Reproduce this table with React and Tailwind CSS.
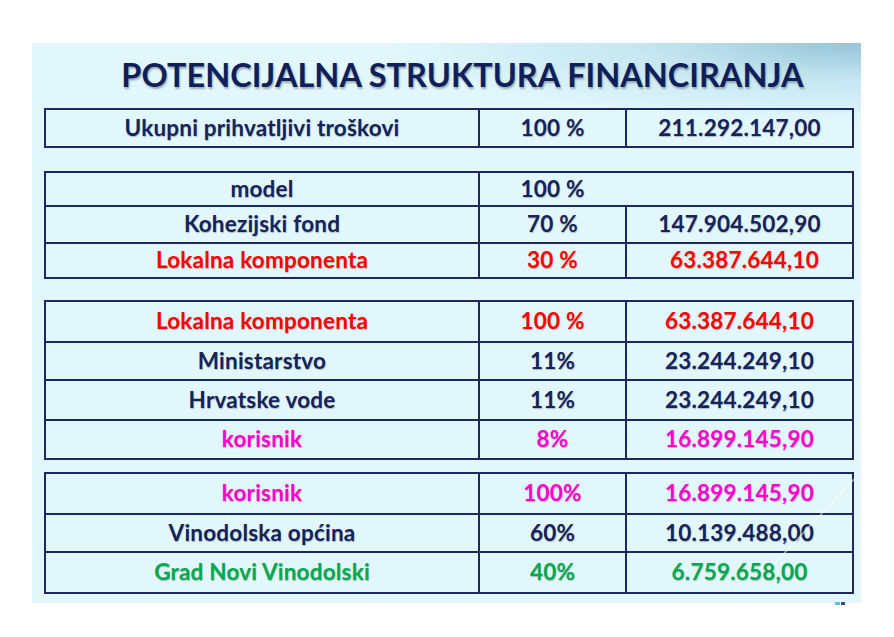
import React from "react";

const navy = "text-[#15235a]";
const red = "text-[#ff0000]";
const pink = "text-[#ff00cc]";
const green = "text-[#00a94f]";

const tables = [
  {
    mt: "mt-0",
    rows: [{ h: "h-[36px]", c: navy, cells: ["Ukupni prihvatljivi troškovi", "100 %", "211.292.147,00"] }],
  },
  {
    mt: "mt-[23px]",
    rows: [
      { h: "h-[32px]", c: navy, cells: ["model", "100 %"], merged: true },
      { h: "h-[37px]", c: navy, cells: ["Kohezijski fond", "70 %", "147.904.502,90"] },
      { h: "h-[35px]", c: red, cells: ["Lokalna komponenta", "30 %", "63.387.644,10"], shift: true },
    ],
  },
  {
    mt: "mt-[21px]",
    rows: [
      { h: "h-[39px]", c: red, cells: ["Lokalna komponenta", "100 %", "63.387.644,10"] },
      { h: "h-[38px]", c: navy, cells: ["Ministarstvo", "11%", "23.244.249,10"] },
      { h: "h-[40px]", c: navy, cells: ["Hrvatske vode", "11%", "23.244.249,10"] },
      { h: "h-[39px]", c: pink, cells: ["korisnik", "8%", "16.899.145,90"] },
    ],
  },
  {
    mt: "mt-[12px]",
    rows: [
      { h: "h-[39px]", c: pink, cells: ["korisnik", "100%", "16.899.145,90"] },
      { h: "h-[38px]", c: navy, cells: ["Vinodolska općina", "60%", "10.139.488,00"] },
      { h: "h-[41px]", c: green, cells: ["Grad Novi Vinodolski", "40%", "6.759.658,00"] },
    ],
  },
];

function Row({ row, first }) {
  return (
    <div
      className={`grid grid-cols-[432px_147px_227px] ${row.h} ${row.c} ${
        first ? "" : "border-t-2 border-[#1b2a5e]"
      }`}
    >
      <div className="flex items-center justify-center">{row.cells[0]}</div>
      {row.merged ? (
        <div className="col-span-2 flex items-center border-l-2 border-[#1b2a5e]">
          <span className="w-[145px] text-center">{row.cells[1]}</span>
        </div>
      ) : (
        <>
          <div className="flex items-center justify-center border-l-2 border-[#1b2a5e]">
            {row.cells[1]}
          </div>
          <div
            className={`flex items-center justify-center border-l-2 border-[#1b2a5e] ${
              row.shift ? "pl-[10px]" : ""
            }`}
          >
            {row.cells[2]}
          </div>
        </>
      )}
    </div>
  );
}

export default function App() {
  return (
    <div
      className="w-[894px] h-[637px] bg-white pt-[43px] pl-[32px]"
      style={{ fontFamily: "Lato, 'Open Sans', sans-serif" }}
    >
      <div className="relative w-[829px] h-[560px] pl-[12px] bg-[#e1f7fc] bg-[radial-gradient(ellipse_480px_80px_at_100%_0%,#95c3d8,#c5e6f0_45%,#e1f7fc_100%)]">
        <h1 className="h-[65px] flex items-center justify-center pl-[20px] text-[32.5px] font-bold leading-none text-[#0f1f5c] [text-shadow:1px_2px_2px_rgba(0,0,0,0.3)]">
          POTENCIJALNA STRUKTURA FINANCIRANJA
        </h1>
        {tables.map((t, i) => (
          <div
            key={i}
            className={`${t.mt} w-[810px] border-2 border-[#1b2a5e] text-[22.5px] font-bold leading-none tracking-[0.2px] [text-shadow:0.5px_0.5px_1px_rgba(0,0,0,0.25)]`}
          >
            {t.rows.map((r, j) => (
              <Row key={j} row={r} first={j === 0} />
            ))}
          </div>
        ))}
        <svg className="absolute right-0 bottom-[36px] pointer-events-none" width="90" height="95" viewBox="0 0 90 95">
          <line x1="90" y1="0" x2="2" y2="93" stroke="white" strokeOpacity="0.6" strokeWidth="1.5" />
        </svg>
        <div className="absolute right-[16px] bottom-[-2px] flex gap-[1px]">
          <span className="w-[5px] h-[3px] bg-[#5bc0de]" />
          <span className="w-[4px] h-[3px] bg-[#3b4a7a]" />
        </div>
      </div>
    </div>
  );
}
